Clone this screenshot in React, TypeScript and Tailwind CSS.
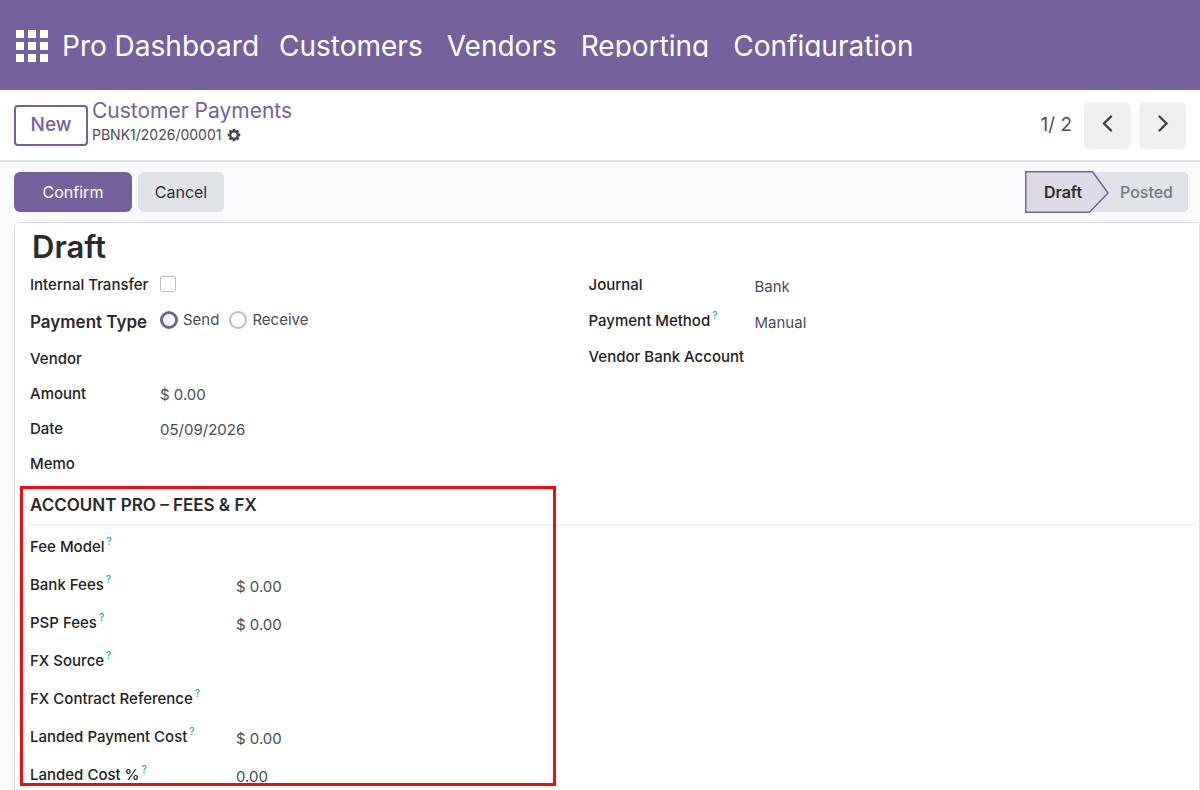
import { useState } from 'react'

interface Field { id: string; label: string; value?: string; help?: boolean }

const menus = ['Customers', 'Vendors', 'Reporting', 'Configuration']

const paymentFields: Field[] = [
  { id: 'vendor', label: 'Vendor' },
  { id: 'amount', label: 'Amount', value: '$ 0.00' },
  { id: 'date', label: 'Date', value: '05/09/2026' },
  { id: 'memo', label: 'Memo' },
]

const bankFields: Field[] = [
  { id: 'journal', label: 'Journal', value: 'Bank' },
  { id: 'method', label: 'Payment Method', value: 'Manual', help: true },
  { id: 'vendor_bank', label: 'Vendor Bank Account' },
]

const feeFields: Field[] = [
  { id: 'fee_model', label: 'Fee Model', help: true },
  { id: 'bank_fees', label: 'Bank Fees', value: '$ 0.00', help: true },
  { id: 'psp_fees', label: 'PSP Fees', value: '$ 0.00', help: true },
  { id: 'fx_source', label: 'FX Source', help: true },
  { id: 'fx_contract', label: 'FX Contract Reference', help: true },
  { id: 'landed_cost', label: 'Landed Payment Cost', value: '$ 0.00', help: true },
  { id: 'landed_pct', label: 'Landed Cost %', value: '0.00', help: true },
]

const labelCls = 'shrink-0 whitespace-nowrap text-[15px] leading-5 font-medium text-[#222225]'
const radioCls = `w-[18px] h-[18px] shrink-0 appearance-none rounded-full bg-white border-2 border-[#bdbdbd]
  checked:border-[3px] checked:border-[#76619d]`
const pagerCls = 'flex items-center justify-center w-[47px] h-[47px] rounded-md bg-[#eff0f2] text-[#3f4247]'

function FieldRow({ field, rowCls, labelW }: { field: Field; rowCls: string; labelW: string }) {
  return (
    <div className={`flex items-center ${rowCls}`}>
      <label htmlFor={field.id} className={`${labelCls} ${labelW}`}>
        {field.label}
        {field.help && <sup className="ml-0.5 align-[2px] text-[10px] font-medium leading-none text-[#2f9fc9]">?</sup>}
      </label>
      <input id={field.id} type="text" defaultValue={field.value}
        className="min-w-0 flex-1 bg-transparent pt-[3px] text-[15px] leading-5 text-[#4b4d55] outline-none" />
    </div>
  )
}

function AppsIcon() {
  return (
    <svg className="w-8 h-8 fill-white" viewBox="0 0 32 32">
      {[0, 12, 24].map(y => [0, 12, 24].map(x => (
        <rect key={`${x}-${y}`} x={x} y={y} width="8" height="8" />
      )))}
    </svg>
  )
}

function GearIcon() {
  return (
    <svg className="w-3.5 h-3.5" viewBox="0 0 14 14">
      <g fill="#43464d">
        {[0, 45, 90, 135].map(a => (
          <rect key={a} x="5.6" y="0.7" width="2.8" height="12.6" rx="0.4" transform={`rotate(${a} 7 7)`} />
        ))}
        <circle cx="7" cy="7" r="4.8" />
      </g>
      <circle cx="7" cy="7" r="2.6" fill="#fff" />
    </svg>
  )
}

function Chevron({ d }: { d: string }) {
  return (
    <svg className="w-5 h-5 fill-none stroke-current stroke-[2.4]" viewBox="0 0 20 20" strokeLinecap="round">
      <path d={d} />
    </svg>
  )
}

export default function App() {
  const [type, setType] = useState('send')
  const [internal, setInternal] = useState(false)

  return (
    <div className="flex h-screen flex-col overflow-hidden bg-[#f9fafc] font-['Inter',sans-serif] text-[#2b2b2e]">
      {/* Top menu */}
      <header className="flex h-[90px] shrink-0 items-center bg-[#76619d] px-4 text-[28px] leading-8 text-white">
        <button type="button" aria-label="Apps" className="mt-0.5"><AppsIcon /></button>
        <a href="#" className="ml-3.5 whitespace-nowrap pt-0.5">Pro Dashboard</a>
        <nav className="mb-[3px] ml-5 flex h-[27px] items-start gap-6 overflow-hidden whitespace-nowrap">
          {menus.map(m => <a key={m} href="#">{m}</a>)}
        </nav>
      </header>

      {/* Breadcrumb and pager */}
      <div className="flex h-[72px] shrink-0 items-center justify-between border-b-2 border-[#dfe2e6] bg-white px-3.5">
        <div className="flex items-center gap-1">
          <button type="button" className="h-[41px] w-[74px] rounded border-2 border-[#76619d] text-[19px] leading-6 font-medium text-[#76619d]">New</button>
          <div className="pb-1">
            <a href="#" className="block text-[21px] leading-6 text-[#76619d]">Customer Payments</a>
            <div className="flex items-center gap-1.5 text-sm leading-6 text-[#4b4d55]">
              PBNK1/2026/00001
              <button type="button" aria-label="Actions"><GearIcon /></button>
            </div>
          </div>
        </div>
        <div className="flex items-center">
          <span className="mr-3 text-[19px] leading-6 text-[#4b4d55]">1/ 2</span>
          <button type="button" aria-label="Previous" className={pagerCls}><Chevron d="M13 1.5 6 8.5l7 7" /></button>
          <button type="button" aria-label="Next" className={`ml-2 ${pagerCls}`}><Chevron d="M6.5 1.5l7 7-7 7" /></button>
        </div>
      </div>

      {/* Actions and status */}
      <div className="flex h-[60px] shrink-0 items-center justify-between pl-3.5 pr-3">
        <div className="flex gap-1.5">
          <button type="button" className="h-10 w-[118px] rounded-md bg-[#76619d] text-base text-white">Confirm</button>
          <button type="button" className="h-10 w-[86px] rounded-md bg-[#dfe2e6] text-base text-[#2f3136]">Cancel</button>
        </div>
        <div className="flex items-center">
          <button type="button" className="relative z-10 h-[42px] w-[84px] pr-2 text-base font-semibold">
            <svg className="absolute inset-0 h-full w-full fill-[#dedae7] stroke-[#76619d]" viewBox="0 0 84 42">
              <path d="M.75.75H67.5L83 22 64.5 41.25H.75z" strokeWidth="1.5" />
            </svg>
            <span className="relative">Draft</span>
          </button>
          <button type="button" className="-ml-5 h-10 w-[99px] rounded-r bg-[#dfe2e6] pl-4 text-base font-medium text-[#727a84]">Posted</button>
        </div>
      </div>

      {/* Form sheet */}
      <main className="ml-3.5 flex-1 rounded-tl-md border border-[#dfe3e8] bg-white pl-[15px]">
        <h1 className="pl-0.5 pt-1 text-[31px] leading-10 font-semibold">Draft</h1>
        <div className="grid grid-cols-2">
          <div>
            <div className="flex h-9 items-center">
              <label htmlFor="internal" className={`${labelCls} w-[130px]`}>Internal Transfer</label>
              <input id="internal" type="checkbox" checked={internal} onChange={e => setInternal(e.target.checked)}
                className="mb-0.5 h-4 w-4 appearance-none rounded-xs border border-[#bdbdbd] bg-white checked:bg-[#76619d]" />
            </div>
            <div role="radiogroup" aria-labelledby="ptype" className="flex h-[38px] items-center">
              <span id="ptype" className="w-[130px] shrink-0 whitespace-nowrap text-[17px] leading-6 font-semibold">Payment Type</span>
              {['Send', 'Receive'].map(t => (
                <label key={t} className="mr-2.5 flex items-center gap-[5px] pb-1 text-[15px] leading-5 text-[#4b4d55]">
                  <input type="radio" name="ptype" className={radioCls}
                    checked={type === t.toLowerCase()} onChange={() => setType(t.toLowerCase())} />
                  {t}
                </label>
              ))}
            </div>
            {paymentFields.map(f => <FieldRow key={f.id} field={f} rowCls="h-[35px]" labelW="w-[130px]" />)}
          </div>
          <div className="-ml-[26px]">
            {bankFields.map(f => <FieldRow key={f.id} field={f} rowCls="h-9" labelW="w-[166px]" />)}
          </div>
        </div>

        {/* Fees & FX, with the highlight frame laid over it */}
        <section className="relative mt-[5px] mr-1">
          <h2 className="border-b-2 border-[#f0f1f2] pt-[7px] pb-[7px] text-[17px] leading-6 font-semibold">ACCOUNT PRO – FEES &amp; FX</h2>
          <div className="pt-0.5">
            {feeFields.map(f => <FieldRow key={f.id} field={f} rowCls="h-[38px]" labelW="w-[206px]" />)}
          </div>
          <div className="pointer-events-none absolute -left-2.5 top-0 h-[300px] w-[536px] border-[3px] border-[#ec0f0f]" />
        </section>
      </main>
    </div>
  )
}
